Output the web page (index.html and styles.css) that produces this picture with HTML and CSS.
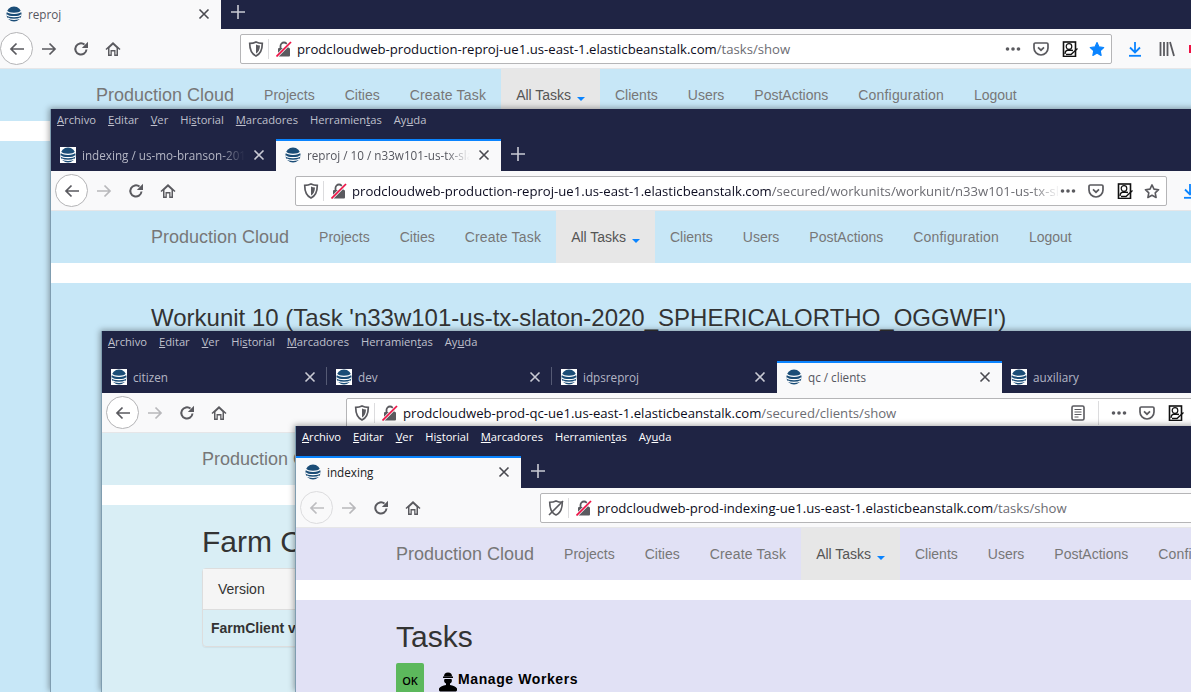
FILE: index.html
```html
<!DOCTYPE html>
<html>
<head>
    <meta charset="UTF-8">
    <title>Production Cloud</title>
    <link rel="stylesheet" href="styles.css">
</head>
<body>
    <svg class="sprites" xmlns="http://www.w3.org/2000/svg">
        <symbol id="i-fav" viewBox="0 0 16 16">
            <circle cx="8" cy="8" r="7.6" fill="#1b4d77"/>
            <path d="M.6 5.2C3 8 13 8 15.4 5.2M.4 8.6C3 11.4 13 11.4 15.6 8.6M1.6 12C4 13.8 12 13.8 14.4 12" fill="none" stroke="#fff" stroke-width="1.3"/>
        </symbol>
        <symbol id="i-close" viewBox="0 0 12 12">
            <path d="M1.5 1.5l9 9M10.5 1.5l-9 9" fill="none" stroke="currentColor" stroke-width="1.6"/>
        </symbol>
        <symbol id="i-plus" viewBox="0 0 14 14">
            <path d="M7 0v14M0 7h14" fill="none" stroke="currentColor" stroke-width="1.6"/>
        </symbol>
        <symbol id="i-back" viewBox="0 0 16 16">
            <path d="M15 8H2M7.5 2.5L2 8l5.500 5.500" fill="none" stroke="currentColor" stroke-width="1.700"/>
        </symbol>
        <symbol id="i-fwd" viewBox="0 0 16 16">
            <path d="M1 8h13M8.500 2.500L14 8l-5.500 5.500" fill="none" stroke="currentColor" stroke-width="1.700"/>
        </symbol>
        <symbol id="i-reload" viewBox="0 0 16 16">
            <path d="M13.500 8.500A5.600 5.600 0 1 1 11.500 3.600" fill="none" stroke="currentColor" stroke-width="2"/>
            <path d="M15 .8V7H8.800z" fill="currentColor"/>
        </symbol>
        <symbol id="i-home" viewBox="0 0 16 16">
            <path d="M8 1L.5 8l1 1.100L3 7.800V15h3.800v-4.500h2.400V15H13V7.800l1.500 1.300 1-1.100z" fill="currentColor"/>
            <path d="M4.500 7L8 3.800 11.500 7v6.500h-1v-4.500h-5v4.500h-1z" fill="#f9f9fa"/>
        </symbol>
        <symbol id="i-shield" viewBox="0 0 16 16">
            <path d="M8 1c2 1 4.500 1.300 6.300 1.300 0 6-1.300 10.500-6.300 12.700C3 12.800 1.700 8.300 1.700 2.300 3.500 2.300 6 2 8 1z" fill="none" stroke="currentColor" stroke-width="1.700"/>
            <path d="M8 3.500v9c2.500-1.500 3.800-4 4-8-1.500 0-2.800-.4-4-1z" fill="currentColor"/>
        </symbol>
        <symbol id="i-noshield" viewBox="0 0 16 16">
            <path d="M8 1c2 1 4.500 1.300 6.300 1.300 0 6-1.300 10.500-6.300 12.700C3 12.800 1.700 8.300 1.700 2.300 3.500 2.300 6 2 8 1z" fill="none" stroke="currentColor" stroke-width="1.600"/>
            <path d="M1 15L15 1" stroke="currentColor" stroke-width="1.600"/>
        </symbol>
        <symbol id="i-lock" viewBox="0 0 16 16">
            <path d="M4.500 7V5a3.500 3.500 0 0 1 7 0v2" fill="none" stroke="#5a5a5f" stroke-width="1.800"/>
            <rect x="2" y="7" width="12" height="8.500" rx="1" fill="#5a5a5f"/>
            <path d="M.5 15.500L15 1" stroke="#f9f9fa" stroke-width="3.200"/>
            <path d="M.5 15.500L15 1" stroke="#ee1144" stroke-width="1.700"/>
        </symbol>
        <symbol id="i-more" viewBox="0 0 16 6">
            <circle cx="2.500" cy="3" r="1.800" fill="currentColor"/>
            <circle cx="8" cy="3" r="1.800" fill="currentColor"/>
            <circle cx="13.500" cy="3" r="1.800" fill="currentColor"/>
        </symbol>
        <symbol id="i-pocket" viewBox="0 0 16 16">
            <path d="M2.300 2h11.400c.7 0 1.300.6 1.300 1.300V7A7 7 0 0 1 1 7V3.300C1 2.600 1.600 2 2.300 2z" fill="none" stroke="currentColor" stroke-width="1.700"/>
            <path d="M5 6.300L8 9.200l3-2.900" fill="none" stroke="currentColor" stroke-width="1.700"/>
        </symbol>
        <symbol id="i-notes" viewBox="0 0 16 16">
            <rect x="1.500" y="1" width="12" height="14.500" fill="#fff" stroke="#111" stroke-width="1.600"/>
            <circle cx="7" cy="5.500" r="2.800" fill="none" stroke="#111" stroke-width="1.200"/>
            <path d="M3 13c0-3 2-4 4-4l4 .5M4 13.500h5l6.500-6" fill="none" stroke="#111" stroke-width="1.300"/>
        </symbol>
        <symbol id="i-star" viewBox="0 0 16 16">
            <path d="M8 1.600l2 4.300 4.700.6-3.500 3.200.9 4.700L8 12.100l-4.100 2.300.9-4.700L1.300 6.500 6 5.900z" fill="currentColor" stroke="currentColor" stroke-width="1.200" stroke-linejoin="round"/>
        </symbol>
        <symbol id="i-starline" viewBox="0 0 16 16">
            <path d="M8 1.900l2 4.200 4.600.6-3.400 3.200.9 4.600L8 12.300l-4.100 2.200.9-4.600L1.400 6.700 6 6.100z" fill="none" stroke="currentColor" stroke-width="1.600" stroke-linejoin="round"/>
        </symbol>
        <symbol id="i-reader" viewBox="0 0 16 16">
            <rect x="2" y="1" width="12" height="14" rx="1.500" fill="none" stroke="currentColor" stroke-width="1.600"/>
            <path d="M4.500 4.500h7M4.500 7h7M4.500 9.500h7M4.500 12h4" stroke="currentColor" stroke-width="1"/>
        </symbol>
        <symbol id="i-down" viewBox="0 0 16 16">
            <path d="M8 1v10M3 6.500L8 11.500l5-5" fill="none" stroke="currentColor" stroke-width="1.800"/>
            <path d="M2 14.800h12" stroke="currentColor" stroke-width="1.800"/>
        </symbol>
        <symbol id="i-library" viewBox="0 0 16 16">
            <path d="M1.500 1v14M5 1v14M8.500 1v14M11 1l4 14" fill="none" stroke="currentColor" stroke-width="1.800"/>
        </symbol>
        <symbol id="i-worker" viewBox="0 0 20 20">
            <path d="M6 4.500a4 4 0 0 1 8 0z" fill="#000"/>
            <rect x="5" y="4.500" width="10" height="1.500" fill="#000"/>
            <path d="M6.500 7h7a3.500 3.500 0 0 1-1.500 4.500v1.500c3 .5 6 1.500 7 3.500v1.500c0 1-1 1.500-2 1.500H3c-1 0-2-.5-2-1.500v-1.500c1-2 4-3 7-3.500v-1.500A3.500 3.500 0 0 1 6.500 7z" fill="#000"/>
        </symbol>
    </svg>

    <!-- window 1 -->
    <div class="win win-one">
        <div class="tabs">
            <div class="tab active plain"><svg class="fav"><use href="#i-fav"/></svg><span class="tab-title">reproj</span><svg class="tab-x"><use href="#i-close"/></svg></div>
            <svg class="new-tab"><use href="#i-plus"/></svg>
        </div>
        <div class="toolbar">
            <span class="circle"><svg class="ico"><use href="#i-back"/></svg></span>
            <svg class="ico btn"><use href="#i-fwd"/></svg>
            <svg class="ico btn"><use href="#i-reload"/></svg>
            <svg class="ico btn"><use href="#i-home"/></svg>
            <div class="urlbar">
                <svg class="ico shield"><use href="#i-shield"/></svg>
                <svg class="ico lock"><use href="#i-lock"/></svg>
                <span class="url"><b>prodcloudweb-production-reproj-ue1.us-east-1.elasticbeanstalk.com</b>/tasks/show</span>
                <svg class="more"><use href="#i-more"/></svg>
                <svg class="ico act"><use href="#i-pocket"/></svg>
                <svg class="ico act notes"><use href="#i-notes"/></svg>
                <svg class="ico star-on"><use href="#i-star"/></svg>
            </div>
            <svg class="ico down"><use href="#i-down"/></svg>
            <svg class="ico library"><use href="#i-library"/></svg>
            <span class="red-bit"></span>
        </div>
        <div class="page">
            <nav class="navbar">
                <a class="brand">Production Cloud</a>
                <a>Projects</a><a>Cities</a><a class="wide">Create Task</a><a class="on">All Tasks <i class="caret"></i></a><a>Clients</a><a>Users</a><a>PostActions</a><a class="wide">Configuration</a><a>Logout</a>
            </nav>
            <div class="band"></div>
        </div>
    </div>

    <!-- window 2 -->
    <div class="win win-two">
        <div class="menubar"><span><u>A</u>rchivo</span><span><u>E</u>ditar</span><span><u>V</u>er</span><span>Hi<u>s</u>torial</span><span><u>M</u>arcadores</span><span>Herramien<u>t</u>as</span><span>Ay<u>u</u>da</span></div>
        <div class="tabs">
            <div class="tab"><svg class="fav boxed"><use href="#i-fav"/></svg><span class="tab-title fade">indexing / us-mo-branson-2018_SPHERICAL</span><svg class="tab-x"><use href="#i-close"/></svg></div>
            <div class="tab active"><svg class="fav"><use href="#i-fav"/></svg><span class="tab-title fade">reproj / 10 / n33w101-us-tx-slaton-2020</span><svg class="tab-x"><use href="#i-close"/></svg></div>
            <svg class="new-tab"><use href="#i-plus"/></svg>
        </div>
        <div class="toolbar">
            <span class="circle"><svg class="ico"><use href="#i-back"/></svg></span>
            <svg class="ico btn off"><use href="#i-fwd"/></svg>
            <svg class="ico btn"><use href="#i-reload"/></svg>
            <svg class="ico btn"><use href="#i-home"/></svg>
            <div class="urlbar">
                <svg class="ico shield"><use href="#i-shield"/></svg>
                <svg class="ico lock"><use href="#i-lock"/></svg>
                <span class="url url-fade"><b>prodcloudweb-production-reproj-ue1.us-east-1.elasticbeanstalk.com</b>/secured/workunits/workunit/n33w101-us-tx-slaton-2020</span>
                <svg class="more"><use href="#i-more"/></svg>
                <svg class="ico act"><use href="#i-pocket"/></svg>
                <svg class="ico act notes"><use href="#i-notes"/></svg>
                <svg class="ico star-off"><use href="#i-starline"/></svg>
            </div>
            <svg class="ico down"><use href="#i-down"/></svg>
        </div>
        <div class="page">
            <nav class="navbar">
                <a class="brand">Production Cloud</a>
                <a>Projects</a><a>Cities</a><a class="wide">Create Task</a><a class="on">All Tasks <i class="caret"></i></a><a>Clients</a><a>Users</a><a>PostActions</a><a class="wide">Configuration</a><a>Logout</a>
            </nav>
            <div class="band"></div>
            <div class="content">
                <h2 class="unit-title">Workunit 10 (Task 'n33w101-us-tx-slaton-2020_SPHERICALORTHO_OGGWFI')</h2>
            </div>
        </div>
    </div>

    <!-- window 3 -->
    <div class="win win-three">
        <div class="menubar"><span><u>A</u>rchivo</span><span><u>E</u>ditar</span><span><u>V</u>er</span><span>Hi<u>s</u>torial</span><span><u>M</u>arcadores</span><span>Herramien<u>t</u>as</span><span>Ay<u>u</u>da</span></div>
        <div class="tabs">
            <div class="tab sep"><svg class="fav boxed"><use href="#i-fav"/></svg><span class="tab-title">citizen</span><svg class="tab-x"><use href="#i-close"/></svg></div>
            <div class="tab sep"><svg class="fav boxed"><use href="#i-fav"/></svg><span class="tab-title">dev</span><svg class="tab-x"><use href="#i-close"/></svg></div>
            <div class="tab"><svg class="fav boxed"><use href="#i-fav"/></svg><span class="tab-title">idpsreproj</span><svg class="tab-x"><use href="#i-close"/></svg></div>
            <div class="tab active"><svg class="fav"><use href="#i-fav"/></svg><span class="tab-title">qc / clients</span><svg class="tab-x"><use href="#i-close"/></svg></div>
            <div class="tab"><svg class="fav boxed"><use href="#i-fav"/></svg><span class="tab-title">auxiliary</span></div>
        </div>
        <div class="toolbar">
            <span class="circle"><svg class="ico"><use href="#i-back"/></svg></span>
            <svg class="ico btn off"><use href="#i-fwd"/></svg>
            <svg class="ico btn"><use href="#i-reload"/></svg>
            <svg class="ico btn"><use href="#i-home"/></svg>
            <div class="urlbar">
                <svg class="ico shield"><use href="#i-shield"/></svg>
                <svg class="ico lock"><use href="#i-lock"/></svg>
                <span class="url"><b>prodcloudweb-prod-qc-ue1.us-east-1.elasticbeanstalk.com</b>/secured/clients/show</span>
                <svg class="ico reader"><use href="#i-reader"/></svg>
                <span class="url-sep"></span>
                <svg class="more"><use href="#i-more"/></svg>
                <svg class="ico act"><use href="#i-pocket"/></svg>
                <svg class="ico act notes"><use href="#i-notes"/></svg>
                <svg class="ico star-off"><use href="#i-starline"/></svg>
            </div>
        </div>
        <div class="page">
            <nav class="navbar">
                <a class="brand">Production Cloud</a>
            </nav>
            <div class="band"></div>
            <div class="content">
                <h2>Farm Clients</h2>
                <div class="panel">
                    <div class="panel-head">Version</div>
                    <div class="panel-row">FarmClient v</div>
                </div>
            </div>
        </div>
    </div>

    <!-- window 4 -->
    <div class="win win-four">
        <div class="menubar"><span><u>A</u>rchivo</span><span><u>E</u>ditar</span><span><u>V</u>er</span><span>Hi<u>s</u>torial</span><span><u>M</u>arcadores</span><span>Herramien<u>t</u>as</span><span>Ay<u>u</u>da</span></div>
        <div class="tabs">
            <div class="tab active"><svg class="fav"><use href="#i-fav"/></svg><span class="tab-title">indexing</span><svg class="tab-x"><use href="#i-close"/></svg></div>
            <svg class="new-tab"><use href="#i-plus"/></svg>
        </div>
        <div class="toolbar">
            <span class="circle off"><svg class="ico"><use href="#i-back"/></svg></span>
            <svg class="ico btn off"><use href="#i-fwd"/></svg>
            <svg class="ico btn"><use href="#i-reload"/></svg>
            <svg class="ico btn"><use href="#i-home"/></svg>
            <div class="urlbar">
                <svg class="ico shield"><use href="#i-noshield"/></svg>
                <svg class="ico lock"><use href="#i-lock"/></svg>
                <span class="url"><b>prodcloudweb-prod-indexing-ue1.us-east-1.elasticbeanstalk.com</b>/tasks/show</span>
            </div>
        </div>
        <div class="page">
            <nav class="navbar">
                <a class="brand">Production Cloud</a>
                <a>Projects</a><a>Cities</a><a class="wide">Create Task</a><a class="on">All Tasks <i class="caret"></i></a><a>Clients</a><a>Users</a><a>PostActions</a><a class="wide">Configuration</a><a>Logout</a>
            </nav>
            <div class="band"></div>
            <div class="content">
                <h2>Tasks</h2>
                <div class="task-line">
                    <span class="ok">OK</span>
                    <svg class="worker"><use href="#i-worker"/></svg>
                    <strong>Manage Workers</strong>
                </div>
            </div>
        </div>
    </div>
</body>
</html>
```

FILE: styles.css
```css
html, body {
    margin: 0;
    height: 100%;
    overflow: hidden;
}

body {
    position: relative;
    background-color: #c7e7f7;
    font-family: "Liberation Sans", Arial, sans-serif;
}

.sprites {
    display: none;
}

/* windows sit on a free desktop */
.win {
    position: absolute;
    width: 1400px;
    display: flex;
    flex-direction: column;
    border-left: 1px solid #7f9db0;
    box-shadow: -1px -1px 6px rgba(0, 0, 0, 0.35);
}

.win-one {
    left: -5px;
    top: 0;
    height: 692px;
    --page: #c7e7f7;
    box-shadow: none;
}

.win-two {
    left: 50px;
    top: 109px;
    height: 583px;
    --page: #c7e7f7;
}

.win-three {
    left: 101px;
    top: 331px;
    height: 361px;
    --page: #d9eef5;
}

.win-four {
    left: 295px;
    top: 426px;
    height: 266px;
    --page: #e1e1f5;
}

.menubar {
    height: 30px;
    box-sizing: border-box;
    padding: 3px 0 0 6px;
    display: flex;
    gap: 12px;
    background-color: #1f2444;
    color: #bfc0cc;
    font-family: "Open Sans", sans-serif;
    font-size: 11.200px;
    line-height: 16px;
}

.win-four .menubar {
    color: #fff;
}

.tabs {
    height: 32px;
    display: flex;
    align-items: stretch;
    background-color: #1f2444;
    color: #b4b6c4;
    font-family: "Open Sans", sans-serif;
    font-size: 11.700px;
}

.win-one .tabs {
    height: 29px;
}

.tab {
    width: 225px;
    box-sizing: border-box;
    padding: 0 11px 0 9px;
    display: flex;
    align-items: center;
    position: relative;
}

.tab.sep::after {
    content: "";
    position: absolute;
    right: 0;
    top: 6px;
    bottom: 8px;
    width: 1px;
    background-color: #555a74;
}

.tab.active {
    background-color: #f9f9fa;
    color: #55565e;
    border-top: 2px solid #0a84ff;
    padding-bottom: 2px;
}

.win-four .tab.active .tab-title {
    color: #222;
}

.tab.plain {
    border-top: none;
    padding-left: 10px;
}

.fav {
    width: 16px;
    height: 16px;
    flex: none;
}

.fav.boxed {
    background-color: #fff;
}

.tab-title {
    margin-left: 6px;
    flex: 1;
    white-space: nowrap;
    overflow: hidden;
}

.tab-title.fade {
    -webkit-mask-image: linear-gradient(to right, #000 85%, transparent);
    mask-image: linear-gradient(to right, #000 85%, transparent);
}

.tab-x {
    width: 12px;
    height: 12px;
    margin-left: 8px;
    color: #c9cad4;
    flex: none;
}

.tab.active .tab-x {
    color: #4a4a50;
}

.new-tab {
    width: 14px;
    height: 14px;
    margin: 8px 0 0 10px;
    color: #c9cad4;
}

.win-one .new-tab {
    margin-top: 5px;
}

.toolbar {
    height: 40px;
    flex: none;
    display: flex;
    align-items: center;
    padding-left: 4px;
    background-color: #f9f9fa;
    color: #5a5a5f;
    border-bottom: 1px solid #e6e6e8;
    box-sizing: border-box;
}

.ico {
    width: 16px;
    height: 16px;
    flex: none;
}

.circle {
    width: 31px;
    height: 31px;
    border: 1px solid #b4b4b6;
    border-radius: 50%;
    background-color: #fff;
    display: flex;
    align-items: center;
    justify-content: center;
    flex: none;
}

.circle.off {
    color: #bdbdc0;
    border-color: #dcdcde;
    background-color: transparent;
}

.btn {
    margin-left: 16px;
}

.circle + .btn {
    margin-left: 8px;
}

.btn.off {
    color: #b8b8bb;
}

.urlbar {
    width: 870px;
    height: 28px;
    margin-left: 119px;
    flex: none;
    display: flex;
    align-items: center;
    background-color: #fff;
    border: 1px solid #b5b5b7;
    border-radius: 2px;
    box-sizing: content-box;
}

.shield {
    margin-left: 7px;
    padding-right: 4px;
    border-right: 1px solid #dcdcde;
    height: 20px;
    box-sizing: content-box;
}

.lock {
    margin-left: 7px;
}

.url {
    margin-left: 5px;
    flex: 1;
    min-width: 0;
    white-space: nowrap;
    overflow: hidden;
    font-family: "Open Sans", sans-serif;
    font-size: 13.150px;
    color: #6c6c72;
}

.url b {
    font-weight: normal;
    color: #0c0c20;
}

.url-fade {
    -webkit-mask-image: linear-gradient(to right, #000 96%, transparent);
    mask-image: linear-gradient(to right, #000 96%, transparent);
}

.more {
    width: 16px;
    height: 6px;
    flex: none;
    margin-right: 12px;
}

.act {
    margin-right: 13px;
}

.act.notes {
    margin-right: 11px;
}

.star-on {
    color: #0a84ff;
    margin-right: 6px;
}

.star-off {
    margin-right: 6px;
}

.reader {
    margin-right: 12px;
}

.url-sep {
    width: 1px;
    height: 24px;
    margin-right: 12px;
    background-color: #dcdcde;
}

.down {
    margin-left: 15px;
    color: #0a84ff;
}

.library {
    margin-left: 16px;
}

.red-bit {
    width: 4px;
    height: 8px;
    margin-left: 14px;
    background-color: #ee1144;
}

.page {
    flex: 1;
    background-color: var(--page);
    min-height: 0;
}

.navbar {
    height: 52px;
    padding-left: 85px;
    display: flex;
    font-size: 14px;
    color: #777;
}

.navbar a {
    padding: 0 15px;
    line-height: 52px;
    white-space: nowrap;
}

.navbar .wide {
    letter-spacing: 0.18px;
}

.navbar .brand {
    font-size: 18px;
}

.navbar .on {
    background-color: #e7e7e7;
    color: #555;
}

.caret {
    display: inline-block;
    margin-left: 2px;
    vertical-align: middle;
    border-top: 4px solid #0a84ff;
    border-left: 4px solid transparent;
    border-right: 4px solid transparent;
    position: relative;
    top: 3px;
}

.band {
    height: 20px;
    background-color: #fff;
}

.content {
    padding: 20px 0 0 100px;
    color: #333;
}

h2 {
    margin: 0;
    font-size: 30px;
    font-weight: 500;
    line-height: 33px;
    white-space: nowrap;
}

.unit-title {
    font-size: 24px;
    line-height: 28px;
    padding-top: 1px;
}

.panel {
    width: 500px;
    margin-top: 10px;
    border: 1px solid #ddd;
    border-radius: 4px;
    box-shadow: 0 1px 1px rgba(0, 0, 0, 0.05);
    font-size: 14px;
}

.panel-head {
    height: 40px;
    line-height: 40px;
    padding-left: 15px;
    background-color: #f5f5f5;
    border-bottom: 1px solid #ddd;
}

.panel-row {
    height: 36px;
    line-height: 36px;
    padding-left: 8px;
    font-weight: bold;
}

.task-line {
    margin-top: 10px;
    display: flex;
    align-items: flex-start;
}

.ok {
    width: 28px;
    height: 40px;
    padding-top: 10px;
    box-sizing: border-box;
    text-align: center;
    border-radius: 2px;
    background-color: #5cb85c;
    color: #000;
    font-family: "Open Sans", sans-serif;
    font-size: 11px;
    font-weight: 600;
}

.worker {
    width: 20px;
    height: 20px;
    margin: 9px 0 0 14px;
}

.task-line strong {
    font-size: 14px;
    line-height: 30px;
    margin-top: 1px;
    color: #000;
    letter-spacing: 0.6px;
}
```
